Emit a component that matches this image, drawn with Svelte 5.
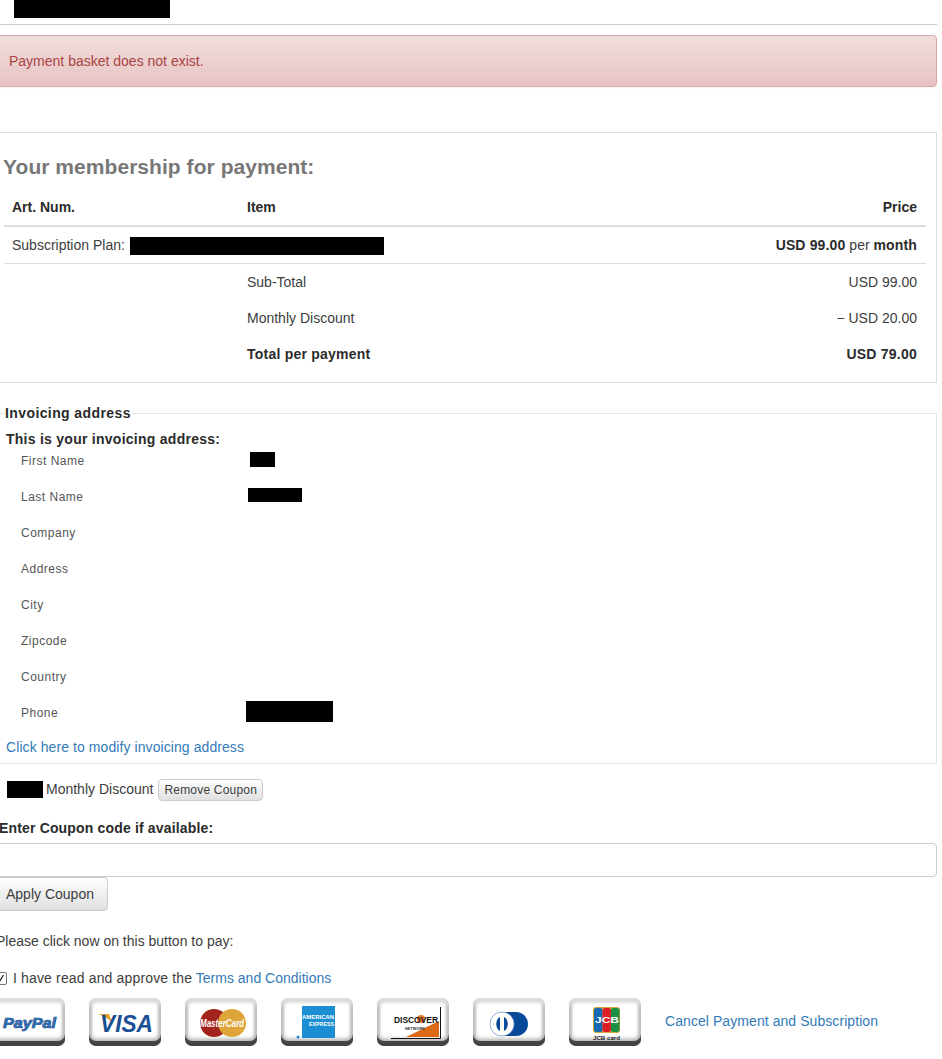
<script>
  const totals = [
    { label: 'Sub-Total', value: 'USD 99.00' },
    { label: 'Monthly Discount', value: '− USD 20.00' },
    { label: 'Total per payment', value: 'USD 79.00', strong: true }
  ]

  const address = [
    { label: 'First Name', width: 25, offset: 2, height: 15 },
    { label: 'Last Name', width: 54, offset: 0, height: 14 },
    { label: 'Company' },
    { label: 'Address' },
    { label: 'City' },
    { label: 'Zipcode' },
    { label: 'Country' },
    { label: 'Phone', width: 87, offset: -2, height: 21 }
  ]
</script>

<div class="page">
  <header class="topbar">
    <span class="redacted logo"></span>
  </header>

  <div class="alert">Payment basket does not exist.</div>

  <section class="panel">
    <h2>Your membership for payment:</h2>
    <table>
      <thead>
        <tr>
          <th class="col-art">Art. Num.</th>
          <th>Item</th>
          <th class="right">Price</th>
        </tr>
      </thead>
      <tbody>
        <tr class="plan">
          <td colspan="2">Subscription Plan: <span class="redacted plan-name"></span></td>
          <td class="right"><strong>USD 99.00</strong> per <strong>month</strong></td>
        </tr>
        {#each totals as row}
          <tr class="total" class:strong={row.strong}>
            <td></td>
            <td>{row.label}</td>
            <td class="right">{row.value}</td>
          </tr>
        {/each}
      </tbody>
    </table>
  </section>

  <fieldset>
    <legend>Invoicing address</legend>
    <h4>This is your invoicing address:</h4>
    <dl>
      {#each address as item}
        <div class="address-row">
          <dt>{item.label}</dt>
          <dd>
            {#if item.width}
              <span class="redacted" style="width: {item.width}px; height: {item.height}px; margin-left: {item.offset}px"></span>
            {/if}
          </dd>
        </div>
      {/each}
    </dl>
    <a href="#invoice" class="modify">Click here to modify invoicing address</a>
  </fieldset>

  <div class="coupon-applied">
    <span class="redacted coupon-name"></span>
    <span>Monthly Discount</span>
    <button class="btn small">Remove Coupon</button>
  </div>

  <label class="coupon-label" for="coupon">Enter Coupon code if available:</label>
  <input id="coupon" class="coupon-input" type="text" />
  <button class="btn apply">Apply Coupon</button>

  <p class="hint">Please click now on this button to pay:</p>

  <div class="terms">
    <span class="check">
      <svg viewBox="0 0 13 13" width="13" height="13">
        <path d="M3.5 6.5 L5.5 9.5 L9.5 3" fill="none" stroke="#333" stroke-width="1.4" />
      </svg>
    </span>
    <span><span class="approve">I have read and approve the</span> <a href="#terms">Terms and Conditions</a></span>
  </div>

  <div class="pay">
    <button class="card" aria-label="PayPal">
      <svg viewBox="0 0 72 48" width="72" height="48">
        <text x="10" y="30" class="paypal" textLength="53" lengthAdjust="spacingAndGlyphs">PayPal</text>
      </svg>
    </button>
    <button class="card" aria-label="Visa">
      <svg viewBox="0 0 72 48" width="72" height="48">
        <path d="M9 16 H20 L24 27 C21 21 15 18 9 16 Z" fill="#e8a030" />
        <text x="11" y="34" class="visa" textLength="53" lengthAdjust="spacingAndGlyphs">VISA</text>
      </svg>
    </button>
    <button class="card" aria-label="MasterCard">
      <svg viewBox="0 0 72 48" width="72" height="48">
        <circle cx="29" cy="25" r="14" fill="#a3241d" />
        <circle cx="47" cy="25" r="14" fill="#dfa53a" />
        <text x="15" y="29" class="mc" textLength="44" lengthAdjust="spacingAndGlyphs">MasterCard</text>
      </svg>
    </button>
    <button class="card" aria-label="American Express">
      <svg viewBox="0 0 72 48" width="72" height="48">
        <rect x="21" y="8" width="33" height="32" fill="#1c8fd4" />
        <circle cx="17" cy="39" r="1.5" fill="#1c8fd4" />
        <text x="21" y="21" class="amex" textLength="32" lengthAdjust="spacingAndGlyphs">AMERICAN</text>
        <text x="28" y="28" class="amex" textLength="25" lengthAdjust="spacingAndGlyphs">EXPRESS</text>
      </svg>
    </button>
    <button class="card" aria-label="Discover">
      <svg viewBox="0 0 72 48" width="72" height="48">
        <path d="M29 39 L62 23 V39 Z" fill="#dc6a17" />
        <path d="M14 40.5 H63.5 V9" fill="none" stroke="#111" stroke-width="1" />
        <circle cx="44" cy="21" r="4" fill="#e8792a" />
        <text x="17" y="25" class="discover" textLength="44" lengthAdjust="spacingAndGlyphs">DISCOVER</text>
        <text x="28" y="32" class="tiny" textLength="20" lengthAdjust="spacingAndGlyphs">NETWORK</text>
      </svg>
    </button>
    <button class="card" aria-label="Diners Club">
      <svg viewBox="0 0 72 48" width="72" height="48">
        <rect x="17" y="14" width="38" height="24" rx="12" fill="#074a9a" />
        <circle cx="29" cy="26" r="12" fill="#fff" stroke="#7fa2cf" stroke-width="0.7" />
        <path d="M27 19 V33 C22 31 22 21 27 19 Z M31 19 C36 21 36 31 31 33 Z" fill="#074a9a" />
      </svg>
    </button>
    <button class="card" aria-label="JCB">
      <svg viewBox="0 0 72 48" width="72" height="48">
        <rect x="24" y="9" width="27" height="26" rx="3" fill="#d4a93a" />
        <rect x="25" y="10" width="8.5" height="24" rx="2.5" fill="#1769b5" />
        <rect x="33.5" y="10" width="8.5" height="24" rx="2.5" fill="#dc1f26" />
        <rect x="42" y="10" width="8.5" height="24" rx="2.5" fill="#1a8f45" />
        <text x="26" y="25" class="jcb" textLength="24" lengthAdjust="spacingAndGlyphs">JCB</text>
        <text x="24" y="41.5" class="jcb-small" textLength="27" lengthAdjust="spacingAndGlyphs">JCB card</text>
      </svg>
    </button>
    <a href="#cancel" class="cancel">Cancel Payment and Subscription</a>
  </div>
</div>

<style>
  :global(body) {
    margin: 0;
    overflow-x: hidden;
    background: #fff;
  }

  .page {
    width: 943px;
    margin-left: -6px;
    font-family: 'Liberation Sans', Arial, sans-serif;
    font-size: 14px;
    line-height: 20px;
    color: #3d3d3d;
  }

  a {
    color: #337ab7;
    text-decoration: none;
  }

  strong {
    color: #2b2b2b;
    letter-spacing: 0.15px;
  }

  .redacted {
    display: inline-block;
    background: #000;
    vertical-align: middle;
  }

  .topbar {
    height: 24px;
    border-bottom: 1px solid #ccc;
    padding-left: 20px;
  }

  .logo {
    display: block;
    width: 156px;
    height: 18px;
  }

  .alert {
    box-sizing: border-box;
    height: 52px;
    margin-top: 10px;
    padding: 15px 14px;
    border: 1px solid #dca7a7;
    border-radius: 4px;
    background: linear-gradient(to bottom, #f2dede, #e7c3c3);
    box-shadow: 0 1px 0 rgba(255, 255, 255, 0.25), 0 1px 2px rgba(0, 0, 0, 0.05);
    color: #a94442;
  }

  .panel {
    box-sizing: border-box;
    height: 251px;
    margin-top: 45px;
    padding: 0 10px 0 9px;
    border: 1px solid #ddd;
  }

  h2 {
    margin: 21px 0 0 -1px;
    font-size: 21px;
    line-height: 26px;
    letter-spacing: 0.05px;
    color: #777;
  }

  table {
    width: 100%;
    margin-top: 10px;
    border-collapse: collapse;
  }

  th {
    height: 33px;
    padding: 0 9px 2px 8px;
    border-bottom: 2px solid #ddd;
    text-align: left;
    color: #2b2b2b;
  }

  .col-art {
    width: 218px;
  }

  td {
    padding: 0 9px 0 8px;
  }

  .right {
    text-align: right;
  }

  .plan td {
    height: 36px;
    border-bottom: 1px solid #ddd;
  }

  .plan-name {
    width: 254px;
    height: 18px;
    margin-left: 1px;
  }

  .total td {
    height: 36px;
  }

  .total.strong td {
    font-weight: bold;
    letter-spacing: 0.23px;
    color: #2b2b2b;
  }

  fieldset {
    box-sizing: border-box;
    height: 361px;
    margin: 20px 0 0;
    padding: 0 11px;
    border: 1px solid #e5e5e5;
  }

  legend {
    padding: 0 1px 0 0;
    margin-left: -1px;
    font-weight: bold;
    letter-spacing: 0.4px;
    color: #2b2b2b;
  }

  h4 {
    margin: 6px 0 0;
    font-size: 14px;
    line-height: 20px;
    letter-spacing: 0.26px;
    color: #2b2b2b;
  }

  dl {
    margin: 0;
  }

  .address-row {
    display: grid;
    grid-template-columns: 227px 1fr;
    align-items: center;
    height: 36px;
    padding-left: 15px;
    font-size: 12px;
    letter-spacing: 0.5px;
    color: #555;
    position: relative;
    top: -6px;
  }

  dd {
    margin: -4px 0 0;
    display: flex;
  }

  .modify {
    display: block;
    letter-spacing: 0.08px;
  }

  .coupon-applied {
    display: flex;
    align-items: center;
    gap: 3px;
    height: 22px;
    margin: 14px 0 0 13px;
  }

  .coupon-name {
    width: 36px;
    height: 17px;
  }

  .btn {
    border: 1px solid #ccc;
    border-radius: 4px;
    background: linear-gradient(to bottom, #fff, #e0e0e0);
    font-family: inherit;
    color: #3d3d3d;
  }

  .small {
    height: 22px;
    margin: 2px 0 0 2px;
    padding: 0 5px;
    font-size: 12px;
    line-height: 18px;
    letter-spacing: 0.2px;
  }

  .coupon-label {
    display: block;
    margin: 18px 0 0 5px;
    height: 20px;
    font-weight: bold;
    letter-spacing: 0.16px;
    color: #2b2b2b;
  }

  .coupon-input {
    display: block;
    box-sizing: border-box;
    width: 100%;
    height: 34px;
    margin-top: 5px;
    border: 1px solid #ccc;
    border-radius: 4px;
  }

  .apply {
    display: block;
    height: 34px;
    padding: 0 13px 0 11px;
    font-size: 14px;
  }

  .hint {
    margin: 20px 0 0 2px;
  }

  .terms {
    display: flex;
    align-items: center;
    gap: 6px;
    margin-top: 17px;
    height: 20px;
  }

  .approve {
    letter-spacing: 0.15px;
  }

  .check {
    box-sizing: border-box;
    display: block;
    width: 13px;
    height: 13px;
    border: 1px solid #767676;
    border-radius: 2px;
    line-height: 0;
  }

  .check svg {
    margin: -1px;
  }

  .pay {
    display: flex;
    align-items: center;
    gap: 24px;
    margin: 10px 0 0 -1px;
    height: 48px;
  }

  .card {
    width: 72px;
    height: 48px;
    padding: 0;
    border: 0;
    border-radius: 7px;
    background: #fff;
    box-shadow:
      inset 0 -5px 0 #444,
      inset 0 -9px 4px -2px #aaa,
      inset 0 6px 3px -1px #ddd,
      inset 4px 0 3px -1px #bbb,
      inset -4px 0 3px -1px #bbb;
    line-height: 0;
  }

  .cancel {
    margin-top: -2px;
    letter-spacing: 0.07px;
  }

  text {
    font-family: 'Liberation Sans', Arial, sans-serif;
    font-weight: bold;
    letter-spacing: 0;
  }

  .paypal {
    font-size: 15px;
    font-style: italic;
    fill: #2b6cb4;
    stroke: #12336d;
    stroke-width: 0.7;
    paint-order: stroke;
  }

  .visa {
    font-size: 24px;
    font-style: italic;
    fill: #1a4f93;
  }

  .mc {
    font-size: 10px;
    font-style: italic;
    fill: #fff;
  }

  .amex {
    font-size: 6px;
    fill: #fff;
  }

  .discover {
    font-size: 9px;
    fill: #111;
  }

  .tiny {
    font-size: 3px;
    fill: #333;
  }

  .jcb {
    font-size: 9px;
    fill: #fff;
  }

  .jcb-small {
    font-size: 6px;
    fill: #222;
  }
</style>
